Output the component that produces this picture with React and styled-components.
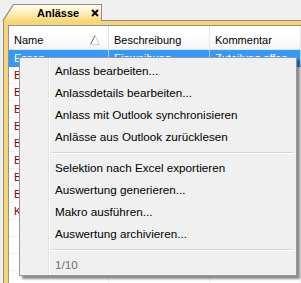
import styled, { createGlobalStyle } from "styled-components";

const GlobalStyle = createGlobalStyle`
  html, body {
    margin: 0;
    padding: 0;
    background: #f0f0f0;
    overflow: hidden;
  }
  body {
    font-family: "Liberation Sans", Arial, sans-serif;
  }
`;

const Window = styled.div`
  position: relative;
  width: 301px;
  height: 283px;
  overflow: hidden;
  background: #f0f0f0;
`;

const TabStrip = styled.div`
  display: flex;
  align-items: flex-end;
  height: 20px;
  padding-left: 2px;
`;

const TabOuter = styled.div`
  position: relative;
  box-sizing: border-box;
  width: 100px;
  height: 17px;
  margin-bottom: -1px;
  padding: 1px 1px 0 1px;
  background: #8f8f8f;
  clip-path: polygon(11px 0, 100% 0, 100% 100%, 0 100%);
`;

const TabFace = styled.div`
  display: flex;
  align-items: center;
  gap: 12px;
  height: 100%;
  padding: 0 0 1px 34px;
  box-sizing: border-box;
  background: linear-gradient(#fffcee, #fff1bf 45%, #f9d879);
  clip-path: polygon(10.8px 0, 100% 0, 100% 100%, 0.5px 100%);
  font-size: 11px;
  font-weight: bold;
  color: #000;
`;

const CloseIcon = () => (
  <svg width="8" height="8" viewBox="0 0 8 8">
    <path d="M1 1 L7 7 M7 1 L1 7" stroke="#000" strokeWidth="1.8" />
  </svg>
);

const Panel = styled.div`
  margin-left: 3px;
  height: 263px;
  box-sizing: border-box;
  border-top: 1px solid #8f8f8f;
  border-left: 1px solid #8f8f8f;
  background: #f8d675;
  padding: 4px 0 0 4px;
  overflow: hidden;
`;

const List = styled.div`
  height: 100%;
  border-top: 1px solid #8c9099;
  border-left: 1px solid #8c9099;
  background: #fff;
  font-size: 11px;
`;

const Columns = styled.div`
  display: grid;
  grid-template-columns: 100px 101px 1fr;
`;

const Header = styled(Columns)`
  height: 24px;
  box-sizing: border-box;
  border-bottom: 1px solid #e5e5e5;
  background: linear-gradient(#ffffff, #ffffff 45%, #f4f5f7);
`;

const HeaderCell = styled.div`
  display: flex;
  align-items: center;
  justify-content: space-between;
  padding: 4px 8px 0 5px;
  border-right: 1px solid #e3e5e8;
  color: #000;
  white-space: nowrap;
`;

const Row = styled(Columns)`
  height: 17px;
  box-sizing: border-box;
  border-bottom: 1px solid ${(p) => (p.$selected ? "#3399ff" : "#efefef")};
  background: ${(p) => (p.$selected ? "#3399ff" : "#fff")};
  color: ${(p) => (p.$selected ? "#fff" : "#800000")};
`;

const Cell = styled.div`
  padding-left: 5px;
  line-height: 17px;
  white-space: nowrap;
  overflow: hidden;
  border-right: 1px solid ${(p) => (p.$selected ? "#a9d3ff" : "#efefef")};
`;

const SortGlyph = () => (
  <svg width="10" height="10" viewBox="0 0 10 10">
    <path d="M0.5 9.5 L5 0.5" stroke="#6f6f6f" strokeWidth="1" fill="none" />
    <path d="M5 0.5 L9.5 9.5 L0.5 9.5" stroke="#d2d2d2" strokeWidth="1" fill="none" />
  </svg>
);

const Menu = styled.div`
  position: absolute;
  left: 19px;
  top: 57px;
  width: 278px;
  height: 219px;
  box-sizing: border-box;
  padding: 2px 2px 1px 2px;
  border: 1px solid #979797;
  background: linear-gradient(
    to right,
    #f0f0f0 28px,
    #e2e3e3 28px,
    #e2e3e3 29px,
    #ffffff 29px,
    #ffffff 30px,
    #f0f0f0 30px
  );
  box-shadow: 3px 3px 2px rgba(0, 0, 0, 0.45);
  font-size: 11.7px;
`;

const MenuItem = styled.div`
  height: 22px;
  line-height: 22px;
  padding-left: 33px;
  color: ${(p) => (p.$disabled ? "#6d6d6d" : "#000")};
  white-space: nowrap;
`;

const Separator = styled.div`
  margin: 4px 0 3px 28px;
  border-top: 1px solid #d7d7d7;
  border-bottom: 1px solid #ffffff;
  height: 0;
`;

const rows = [
  { name: "Essen", desc: "Einweihung", note: "Zuteilung offen", selected: true },
  { name: "Ball", desc: "", note: "" },
  { name: "Bazar", desc: "", note: "" },
  { name: "Brunch", desc: "", note: "" },
  { name: "Basar", desc: "", note: "" },
  { name: "Biken", desc: "", note: "" },
  { name: "Boccia", desc: "", note: "" },
  { name: "Bowling", desc: "", note: "" },
  { name: "Bankett", desc: "", note: "" },
  { name: "Kino", desc: "", note: "" },
  { name: "", desc: "", note: "" },
  { name: "", desc: "", note: "" },
  { name: "", desc: "", note: "" },
  { name: "", desc: "", note: "" },
];

export default function App() {
  return (
    <Window>
      <GlobalStyle />
      <TabStrip>
        <TabOuter>
          <TabFace>
            <span>Anlässe</span>
            <CloseIcon />
          </TabFace>
        </TabOuter>
      </TabStrip>
      <Panel>
        <List>
          <Header>
            <HeaderCell>
              Name
              <SortGlyph />
            </HeaderCell>
            <HeaderCell>Beschreibung</HeaderCell>
            <HeaderCell>Kommentar</HeaderCell>
          </Header>
          {rows.map((r, i) => (
            <Row key={i} $selected={r.selected}>
              <Cell $selected={r.selected}>{r.name}</Cell>
              <Cell $selected={r.selected}>{r.desc}</Cell>
              <Cell $selected={r.selected}>{r.note}</Cell>
            </Row>
          ))}
        </List>
      </Panel>
      <Menu>
        <MenuItem>Anlass bearbeiten...</MenuItem>
        <MenuItem>Anlassdetails bearbeiten...</MenuItem>
        <MenuItem>Anlass mit Outlook synchronisieren</MenuItem>
        <MenuItem>Anlässe aus Outlook zurücklesen</MenuItem>
        <Separator />
        <MenuItem>Selektion nach Excel exportieren</MenuItem>
        <MenuItem>Auswertung generieren...</MenuItem>
        <MenuItem>Makro ausführen...</MenuItem>
        <MenuItem>Auswertung archivieren...</MenuItem>
        <Separator />
        <MenuItem $disabled>1/10</MenuItem>
      </Menu>
    </Window>
  );
}
